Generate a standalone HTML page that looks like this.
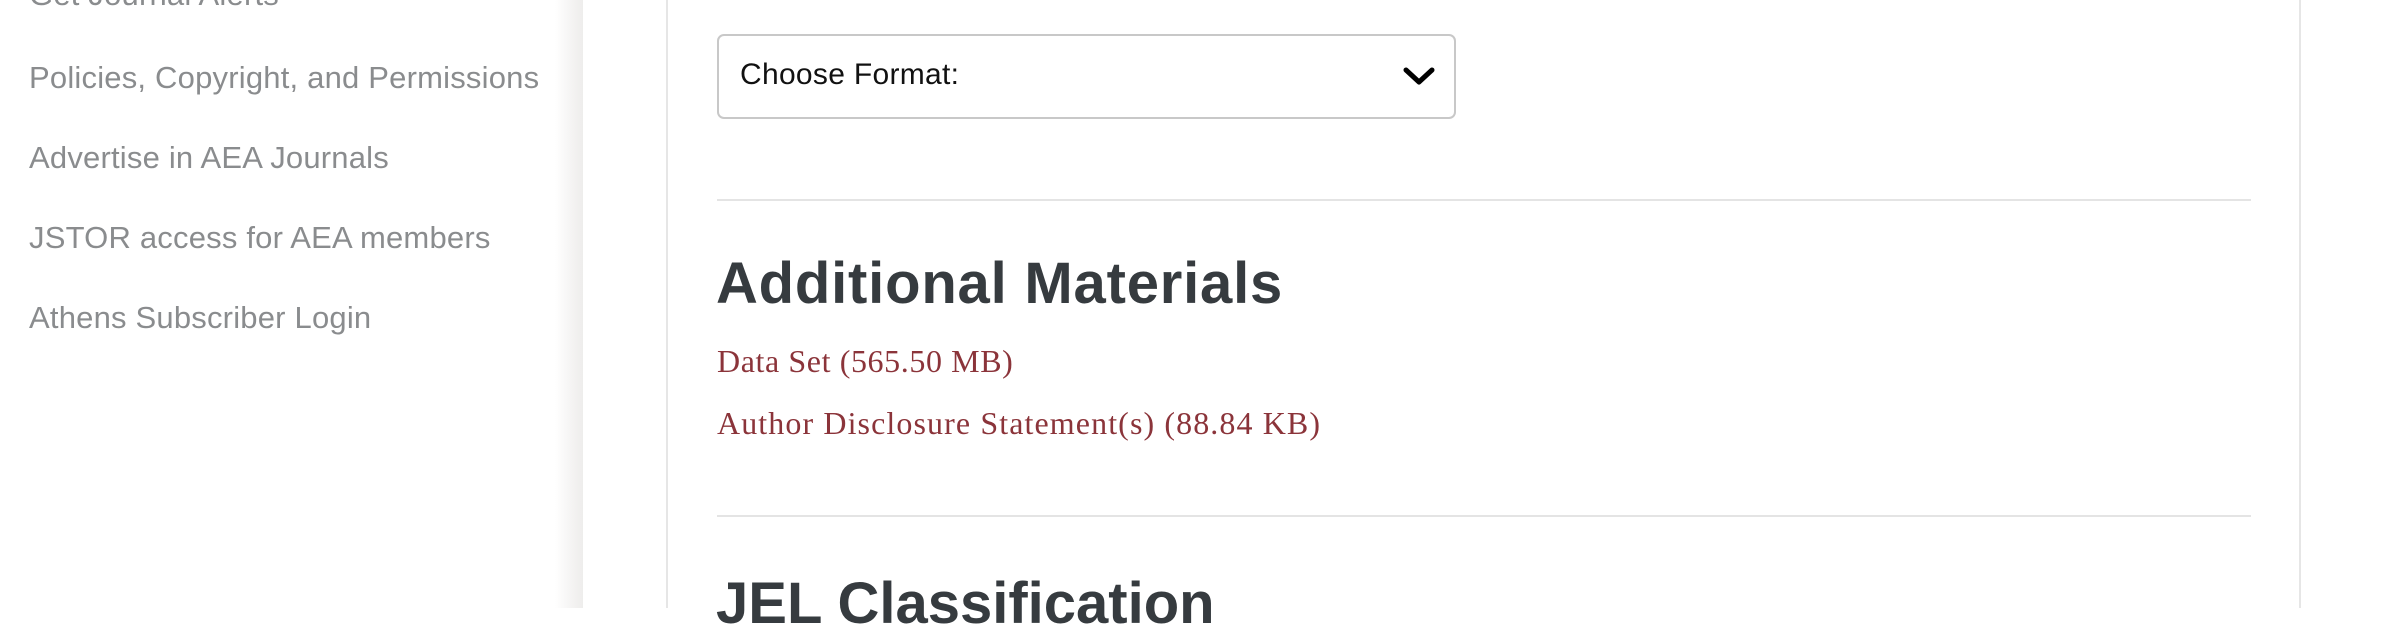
<!DOCTYPE html>
<html><head><style>
body{margin:0;width:2396px;height:608px;overflow:hidden;background:#fff;position:relative;font-family:"Liberation Sans",sans-serif;}
.side{position:absolute;left:29px;color:#8a8c8e;font-size:31px;letter-spacing:0.2px;line-height:1;}
.shadow{position:absolute;left:555px;top:0;width:28px;height:608px;background:linear-gradient(to right,#fff,#f1f0ef 80%,#eeedec);}
.vl{position:absolute;top:0;width:2px;height:608px;background:#e6e6e6;}
.sel{position:absolute;left:717px;top:34px;width:735px;height:81px;border:2px solid #c8c8c8;border-radius:7px;}
.sel span{position:absolute;left:21px;top:22px;font-size:30px;color:#111;letter-spacing:0.3px;}
.hr{position:absolute;left:717px;width:1534px;height:2px;background:#e4e4e4;}
h2{position:absolute;left:716px;margin:0;font-size:58px;font-weight:bold;color:#363b3f;line-height:1;letter-spacing:0.8px;}
.lnk{position:absolute;left:717px;font-family:"Liberation Serif",serif;font-size:32px;color:#8b343a;line-height:1;}
</style></head><body>
<div class="side" style="top:-21px">Get Journal Alerts</div>
<div class="side" style="top:62px">Policies, Copyright, and Permissions</div>
<div class="side" style="top:142px">Advertise in AEA Journals</div>
<div class="side" style="top:222px">JSTOR access for AEA members</div>
<div class="side" style="top:302px">Athens Subscriber Login</div>
<div class="shadow"></div>
<div class="vl" style="left:666px"></div>
<div class="vl" style="left:2299px"></div>
<div class="sel"><span>Choose Format:</span>
<svg style="position:absolute;left:684px;top:31px" width="32" height="20" viewBox="0 0 32 20"><path d="M3 3 L16 15 L29 3" fill="none" stroke="#000" stroke-width="5" stroke-linecap="round" stroke-linejoin="round"/></svg></div>
<div class="hr" style="top:199px"></div>
<h2 style="top:255px">Additional Materials</h2>
<div class="lnk" style="top:345px;letter-spacing:0.6px">Data Set (565.50 MB)</div>
<div class="lnk" style="top:407px;letter-spacing:1.1px">Author Disclosure Statement(s) (88.84 KB)</div>
<div class="hr" style="top:515px"></div>
<h2 style="top:575px;letter-spacing:0">JEL Classification</h2>
</body></html>
